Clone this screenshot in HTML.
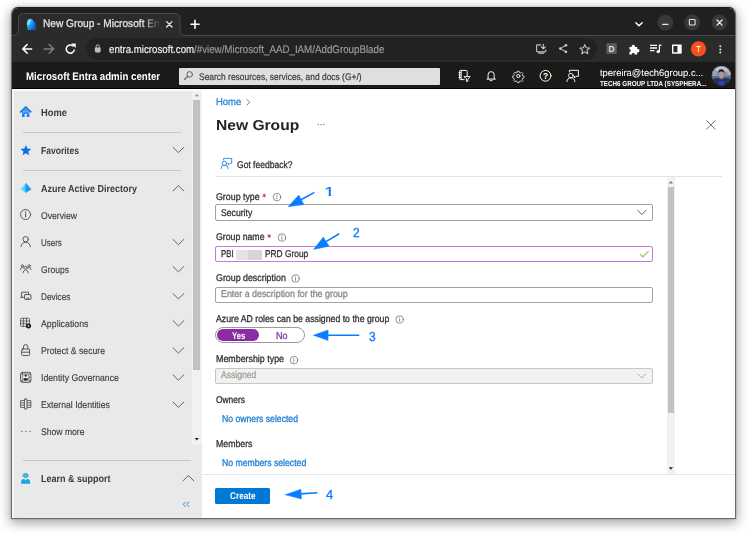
<!DOCTYPE html>
<html lang="en">
<head>
<meta charset="utf-8">
<title>New Group - Microsoft Entra admin center</title>
<style>
*{box-sizing:border-box;margin:0;padding:0}
html,body{width:750px;height:533px;overflow:hidden;background:#fff}
body{font-family:"Liberation Sans",sans-serif;position:relative;color:#323130}
.abs,.t,svg.i{position:absolute}
.t{white-space:nowrap;line-height:16px;height:16px;transform-origin:0 50%;text-rendering:geometricPrecision}
.t b{font-weight:inherit}
svg.i{overflow:visible}
#win{position:absolute;left:11px;top:7px;width:725px;height:512px;border:1px solid #6a6a6a;border-top-color:#1c1c1c;border-radius:7px 7px 0 0;overflow:hidden;background:#fff;
 box-shadow:0 3px 12px 1px rgba(0,0,0,.36),0 0 2px rgba(0,0,0,.3)}
#in{position:absolute;left:-12px;top:-8px;width:750px;height:533px}
/* ---------- browser chrome ---------- */
#titlebar{left:12px;top:8px;width:724px;height:28px;background:#202020}
#toolbar{left:12px;top:35px;width:724px;height:27px;background:#2b2b2b}
#url{left:86px;top:38px;width:511px;height:22px;border-radius:11px;background:#222}
#tabtitle{left:42.7px;top:16px;width:119px;height:16px;overflow:hidden;
 -webkit-mask-image:linear-gradient(90deg,#000 84%,transparent 99%);mask-image:linear-gradient(90deg,#000 84%,transparent 99%)}
#tabtitle .t{left:0;top:0;font-size:11px;line-height:16px;height:16px;color:#e6e6e6;-webkit-text-stroke:.25px}
#urltext b{color:#f2f2f2}
/* ---------- entra header ---------- */
#ehead{left:12px;top:62px;width:724px;height:27px;background:#1b1a19;border-bottom:1px solid #000}
#search{left:179px;top:67.5px;width:260.6px;height:17px;background:#e1dfdd;border-radius:1px}
/* ---------- sidebar ---------- */
#side{left:12px;top:89px;width:190px;height:430px;background:#e9e9e9;border-left:2px solid #f8f8f8;border-top:2px solid #fbfbfb}
#sbtrack{left:191.8px;top:91px;width:10.2px;height:354px;background:#f1f1f1}
#sbthumb{left:193.3px;top:99.6px;width:7.1px;height:270.4px;background:#c1c1c1}
.sep{height:1px;background:#c8c8c8}
/* ---------- main ---------- */
.hl{height:1px;background:#e3e3e3}
.inp{border:1px solid #a3a19f;border-radius:2px;background:#fff}
#mtrack{left:666.5px;top:177px;width:8.8px;height:297px;background:#f1f1f1}
#mthumb{left:667.9px;top:187.2px;width:6.6px;height:226px;background:#c1c1c1}
</style>
</head>
<body>
<div id="win"><div id="in">

<!-- ================= BROWSER CHROME ================= -->
<div id="titlebar" class="abs"></div>
<div id="toolbar" class="abs"></div>
<svg class="i" style="left:0;top:0" width="750" height="64" viewBox="0 0 750 64">
 <path d="M12 35.500C16 35.500 18.500 33.500 18.500 29.500V18.500Q18.500 13.500 23.500 13.500H175Q180 13.500 180 18.500V29.500C180 33.500 182.500 35.500 186.500 35.500V37H12z" fill="#2b2b2b"/>
 <path d="M12 35.500C16 35.500 18.500 33.500 18.500 29.500V18.500Q18.500 13.500 23.500 13.500H175Q180 13.500 180 18.500V29.500C180 33.500 182.500 35.500 186.500 35.500H736" fill="none" stroke="#4b4b4b" stroke-width="1"/>
</svg>
<div id="url" class="abs"></div>
<div id="tabtitle" class="abs"><div class="t" style="transform:scaleX(0.9222)">New Group - Microsoft Entra admin center</div></div>

<!-- ================= ENTRA HEADER ================= -->
<div id="ehead" class="abs"></div>
<div id="search" class="abs"></div>

<!-- ================= SIDEBAR ================= -->
<div id="side" class="abs"></div>
<div id="sbtrack" class="abs"></div>
<div id="sbthumb" class="abs"></div>
<div class="abs sep" style="left:22.7px;top:131.5px;width:158px"></div>
<div class="abs sep" style="left:22.7px;top:169.6px;width:158px"></div>
<div class="abs sep" style="left:22.7px;top:459.6px;width:168px"></div>


<!-- ================= MAIN ================= -->
<div class="abs hl" style="left:215.5px;top:175.6px;width:506px"></div>
<div id="mtrack" class="abs"></div>
<div id="mthumb" class="abs"></div>
<!-- Group type -->
<div class="abs inp" style="left:215.2px;top:204px;width:437.5px;height:16.5px"></div>
<!-- Group name -->
<div class="abs inp" style="left:215.2px;top:245.9px;width:437.5px;height:16px;border-color:#bb7fdb"></div>
<div class="abs" style="left:236px;top:249.5px;width:26px;height:10.5px;background:linear-gradient(90deg,#e4e4e4 0 45%,#d6d6d6 45% 100%);border-radius:1px;filter:blur(.6px)"></div>
<!-- Group description -->
<div class="abs inp" style="left:215.2px;top:286.7px;width:437.5px;height:16px"></div>
<!-- toggle -->
<div class="abs" style="left:215.2px;top:327.3px;width:89.6px;height:16px;border:1px solid #9d9b99;border-radius:8px;background:#fff"></div>
<div class="abs" style="left:217.3px;top:329.2px;width:42px;height:12.3px;border-radius:6.2px;background:#8a2da5"></div>
<!-- Membership type -->
<div class="abs inp" style="left:215.2px;top:368.1px;width:437.5px;height:15.8px;background:#f3f2f1;border-color:#c8c6c4"></div>
<!-- footer -->
<div class="abs hl" style="left:201px;top:474px;width:535px;background:#e6e6e6"></div>
<div class="abs" style="left:215.2px;top:488.1px;width:54.7px;height:16px;background:#0078d4;border-radius:1.5px"></div>


<!-- ================= TEXT ================= -->
<div class="t" style="left:108.80px;top:42px;line-height:16px;height:16px;font-size:11px;color:#f4f4f4;-webkit-text-stroke:0.15px;transform:scaleX(0.8810);">entra.microsoft.com</div>
<div class="t" style="left:194.10px;top:42px;line-height:16px;height:16px;font-size:11px;color:#9e9e9e;-webkit-text-stroke:0.15px;transform:scaleX(0.8872);">/#view/Microsoft_AAD_IAM/AddGroupBlade</div>
<div class="t" style="left:25.90px;top:69px;line-height:16px;height:16px;font-size:11px;font-weight:700;color:#ffffff;transform:scaleX(0.8811);">Microsoft Entra admin center</div>
<div class="t" style="left:198.70px;top:70px;line-height:15px;height:15px;font-size:9.6px;color:#3b3a39;-webkit-text-stroke:0.2px;transform:scaleX(0.8800);">Search resources, services, and docs (G+/)</div>
<div class="t" style="left:599.60px;top:66px;line-height:15px;height:15px;font-size:9.6px;color:#ffffff;-webkit-text-stroke:0.05px;transform:scaleX(0.9779);">tpereira@tech6group.c...</div>
<div class="t" style="left:599.60px;top:77px;line-height:13px;height:13px;font-size:7.2px;font-weight:700;color:#ffffff;transform:scaleX(0.8716);">TECH6 GROUP LTDA (SYSPHERA...</div>
<div class="t" style="left:41.30px;top:106px;line-height:15px;height:15px;font-size:10.1px;font-weight:700;color:#3b3a39;transform:scaleX(0.9235);">Home</div>
<div class="t" style="left:41.30px;top:144px;line-height:15px;height:15px;font-size:10.1px;font-weight:700;color:#3b3a39;transform:scaleX(0.8443);">Favorites</div>
<div class="t" style="left:41.30px;top:182px;line-height:15px;height:15px;font-size:10.1px;font-weight:700;color:#3b3a39;transform:scaleX(0.8897);">Azure Active Directory</div>
<div class="t" style="left:41.30px;top:209px;line-height:15px;height:15px;font-size:9.7px;color:#3b3a39;-webkit-text-stroke:0.12px;transform:scaleX(0.8916);">Overview</div>
<div class="t" style="left:41.30px;top:236px;line-height:15px;height:15px;font-size:9.7px;color:#3b3a39;-webkit-text-stroke:0.12px;transform:scaleX(0.8217);">Users</div>
<div class="t" style="left:41.30px;top:263px;line-height:15px;height:15px;font-size:9.7px;color:#3b3a39;-webkit-text-stroke:0.12px;transform:scaleX(0.8810);">Groups</div>
<div class="t" style="left:41.30px;top:290px;line-height:15px;height:15px;font-size:9.7px;color:#3b3a39;-webkit-text-stroke:0.12px;transform:scaleX(0.8529);">Devices</div>
<div class="t" style="left:41.30px;top:317px;line-height:15px;height:15px;font-size:9.7px;color:#3b3a39;-webkit-text-stroke:0.12px;transform:scaleX(0.9091);">Applications</div>
<div class="t" style="left:41.30px;top:344px;line-height:15px;height:15px;font-size:9.7px;color:#3b3a39;-webkit-text-stroke:0.12px;transform:scaleX(0.8935);">Protect &amp; secure</div>
<div class="t" style="left:41.30px;top:371px;line-height:15px;height:15px;font-size:9.7px;color:#3b3a39;-webkit-text-stroke:0.12px;transform:scaleX(0.8985);">Identity Governance</div>
<div class="t" style="left:41.30px;top:398px;line-height:15px;height:15px;font-size:9.7px;color:#3b3a39;-webkit-text-stroke:0.12px;transform:scaleX(0.8933);">External Identities</div>
<div class="t" style="left:41.30px;top:425px;line-height:15px;height:15px;font-size:9.7px;color:#3b3a39;-webkit-text-stroke:0.12px;transform:scaleX(0.8878);">Show more</div>
<div class="t" style="left:41.30px;top:472px;line-height:15px;height:15px;font-size:10.1px;font-weight:700;color:#3b3a39;transform:scaleX(0.8903);">Learn &amp; support</div>
<div class="t" style="left:215.50px;top:95px;line-height:15px;height:15px;font-size:9.8px;color:#2b88d8;-webkit-text-stroke:0.3px;transform:scaleX(0.9678);">Home</div>
<div class="t" style="left:216.00px;top:116px;line-height:20px;height:20px;font-size:14.5px;font-weight:700;color:#252423;transform:scaleX(1.0757);">New Group</div>
<div class="t" style="left:237.30px;top:158px;line-height:15px;height:15px;font-size:9.8px;color:#323130;-webkit-text-stroke:0.3px;transform:scaleX(0.8708);">Got feedback?</div>
<div class="t" style="left:215.50px;top:190px;line-height:15px;height:15px;font-size:9.8px;color:#323130;-webkit-text-stroke:0.3px;transform:scaleX(0.9016);">Group type</div>
<div class="t" style="left:221.30px;top:206px;line-height:15px;height:15px;font-size:9.8px;color:#323130;-webkit-text-stroke:0.3px;transform:scaleX(0.8816);">Security</div>
<div class="t" style="left:215.50px;top:230px;line-height:15px;height:15px;font-size:9.8px;color:#323130;-webkit-text-stroke:0.3px;transform:scaleX(0.8904);">Group name</div>
<div class="t" style="left:221.30px;top:247px;line-height:15px;height:15px;font-size:9.8px;color:#323130;-webkit-text-stroke:0.3px;transform:scaleX(0.7976);">PBI</div>
<div class="t" style="left:265.30px;top:247px;line-height:15px;height:15px;font-size:9.8px;color:#323130;-webkit-text-stroke:0.3px;transform:scaleX(0.8531);">PRD Group</div>
<div class="t" style="left:215.50px;top:271px;line-height:15px;height:15px;font-size:9.8px;color:#323130;-webkit-text-stroke:0.3px;transform:scaleX(0.9026);">Group description</div>
<div class="t" style="left:221.30px;top:287px;line-height:15px;height:15px;font-size:9.8px;color:#8a8886;-webkit-text-stroke:0.3px;transform:scaleX(0.9052);">Enter a description for the group</div>
<div class="t" style="left:215.50px;top:312px;line-height:15px;height:15px;font-size:9.8px;color:#323130;-webkit-text-stroke:0.3px;transform:scaleX(0.8913);">Azure AD roles can be assigned to the group</div>
<div class="t" style="left:232.00px;top:329px;line-height:15px;height:15px;font-size:9.8px;font-weight:700;color:#ffffff;transform:scaleX(0.7867);">Yes</div>
<div class="t" style="left:276.00px;top:329px;line-height:15px;height:15px;font-size:9.8px;color:#8a2da5;-webkit-text-stroke:0.3px;transform:scaleX(0.9177);">No</div>
<div class="t" style="left:215.50px;top:352px;line-height:15px;height:15px;font-size:9.8px;color:#323130;-webkit-text-stroke:0.3px;transform:scaleX(0.9048);">Membership type</div>
<div class="t" style="left:221.30px;top:368px;line-height:15px;height:15px;font-size:9.8px;color:#a19f9d;-webkit-text-stroke:0.3px;transform:scaleX(0.8732);">Assigned</div>
<div class="t" style="left:215.50px;top:393px;line-height:15px;height:15px;font-size:9.8px;color:#323130;-webkit-text-stroke:0.3px;transform:scaleX(0.8589);">Owners</div>
<div class="t" style="left:221.90px;top:412px;line-height:15px;height:15px;font-size:9.8px;color:#1a7fd6;-webkit-text-stroke:0.3px;transform:scaleX(0.8832);">No owners selected</div>
<div class="t" style="left:215.50px;top:437px;line-height:15px;height:15px;font-size:9.8px;color:#323130;-webkit-text-stroke:0.3px;transform:scaleX(0.8936);">Members</div>
<div class="t" style="left:221.90px;top:456px;line-height:15px;height:15px;font-size:9.8px;color:#1a7fd6;-webkit-text-stroke:0.3px;transform:scaleX(0.8836);">No members selected</div>
<div class="t" style="left:229.90px;top:489px;line-height:15px;height:15px;font-size:9.8px;font-weight:700;color:#ffffff;transform:scaleX(0.8393);">Create</div>
<div class="t" style="left:324.01px;top:182px;line-height:19px;height:19px;font-size:13px;color:#0a7cff;-webkit-text-stroke:.2px;transform:scaleX(1.5151);clip-path:polygon(0 0,100% 0,100% 12.64px,4.65px 12.64px,4.65px 100%,3.05px 100%,3.05px 12.64px,0 12.64px)">1</div>
<div class="t" style="left:352.80px;top:223px;line-height:19px;height:19px;font-size:13px;color:#0a7cff;-webkit-text-stroke:0.3px;transform:scaleX(0.9261);">2</div>
<div class="t" style="left:368.50px;top:327px;line-height:19px;height:19px;font-size:13px;color:#0a7cff;-webkit-text-stroke:0.3px;transform:scaleX(0.9261);">3</div>
<div class="t" style="left:326.10px;top:485px;line-height:19px;height:19px;font-size:13px;color:#0a7cff;-webkit-text-stroke:0.3px;transform:scaleX(0.9952);">4</div>

<!-- ================= ICONS ================= -->
<svg class="i" style="left:0;top:0" width="750" height="533" viewBox="0 0 750 533" fill="none" stroke-linecap="round" stroke-linejoin="round" font-family="Liberation Sans, sans-serif">
<defs>
 <linearGradient id="gfav" x1="0" y1="0" x2=".7" y2="1"><stop offset="0" stop-color="#58e4ff"/><stop offset=".5" stop-color="#1ea7f2"/><stop offset="1" stop-color="#0a78e6"/></linearGradient>
 <linearGradient id="ghome" x1="0" y1="0" x2="0" y2="1"><stop offset="0" stop-color="#4aa3f7"/><stop offset="1" stop-color="#0f78e6"/></linearGradient>
 <clipPath id="cav"><circle cx="721.4" cy="75.7" r="9.7"/></clipPath>
 <filter id="b1"><feGaussianBlur stdDeviation=".7"/></filter>
 <filter id="b2" x="-20%" y="-20%" width="140%" height="140%"><feGaussianBlur stdDeviation=".55"/></filter>
</defs>

<!-- ===== chrome: tab strip ===== -->
<g id="ic-chrome">
 <!-- favicon -->
 <path d="M30.500 21.200h3q2.100 0 2.100 2.300v6.300h-6.500z" fill="#1762d8"/>
 <path d="M27 27.200v-3.600q0-4.800 3.400-4.800 3.100 0 3.100 4.400v2.600q0 3.700-3.600 4.100h-2q-.9-.9-.3-2.100z" fill="url(#gfav)"/>
 <ellipse cx="28.900" cy="22.400" rx="1.500" ry="2.700" fill="#c9fbff" opacity=".6" filter="url(#b2)" transform="rotate(18 28.9 22.4)"/>
 <!-- tab close, new tab -->
 <path d="M166.6 21.600l5.400 5.400M172 21.600l-5.400 5.400" stroke="#ececec" stroke-width="1.3"/>
 <path d="M191 24.200h8M195 20.200v8" stroke="#fff" stroke-width="1.6"/>
 <!-- tab search chevron -->
 <path d="M635.9 22.700l3.100 3.100 3.100-3.100" stroke="#fff" stroke-width="1.5"/>
 <!-- window buttons -->
 <circle cx="665.300" cy="22.600" r="7.900" fill="#383838"/>
 <circle cx="692.200" cy="22.500" r="7.900" fill="#383838"/>
 <circle cx="719.500" cy="22.500" r="7.900" fill="#383838"/>
 <path d="M662.600 24.300h5.400" stroke="#e4e4e4" stroke-width="1.300"/>
 <rect x="689.400" y="19.500" width="5.700" height="5.500" rx=".6" stroke="#e4e4e4" stroke-width="1.100"/>
 <path d="M717 20l5.100 5.100M722.100 20l-5.100 5.100" stroke="#f0f0f0" stroke-width="1.300"/>
</g>

<!-- ===== chrome: toolbar ===== -->
<g id="ic-toolbar">
 <path d="M31.700 48.900H23M27.200 44.500l-4.400 4.400 4.400 4.400" stroke="#fff" stroke-width="1.500"/>
 <path d="M44.200 48.900h8.700M49.200 44.500l4.400 4.400-4.400 4.400" stroke="#7c7c7c" stroke-width="1.500"/>
 <path d="M74.300 50.100a4.100 4.100 0 1 1-1.300-4.200" stroke="#fff" stroke-width="1.500"/>
 <path d="M71.300 43.600h4.400v4.400z" fill="#fff"/>
 <!-- lock -->
 <rect x="94.900" y="47.500" width="5.700" height="4.900" rx=".8" fill="#bdbdbd"/>
 <path d="M96.200 47.600v-1.300a1.550 1.550 0 0 1 3.100 0v1.300" stroke="#bdbdbd" stroke-width="1"/>
 <!-- install -->
 <path d="M540.600 44.900h-3.100q-.9 0-.9.900v5.200q0 .9.900.9h7.400q.9 0 .9-.9v-1.300M538.800 53.300h5" stroke="#c6c6c6" stroke-width="1.100"/>
 <path d="M543.300 44.200v4.300M541.300 46.800l2 2 2-2" stroke="#c6c6c6" stroke-width="1.100"/>
 <!-- share -->
 <path d="M565.800 45.300l-5.400 3.300 5.400 3.200" stroke="#c6c6c6" stroke-width="1"/>
 <circle cx="565.900" cy="45.300" r="1.400" fill="#c6c6c6"/><circle cx="560.400" cy="48.600" r="1.400" fill="#c6c6c6"/><circle cx="565.900" cy="51.800" r="1.400" fill="#c6c6c6"/>
 <!-- star -->
 <path d="M584.800 44.600l1.400 3.200 3.400.3-2.600 2.300.8 3.300-3-1.800-3 1.800.8-3.300-2.600-2.300 3.400-.3z" stroke="#c6c6c6" stroke-width="1.050"/>
 <!-- D extension -->
 <rect x="606.400" y="43.300" width="10.400" height="10.700" rx="1" fill="#5b5b5b"/>
 <text x="611.600" y="51.700" font-size="8.400" font-weight="700" text-anchor="middle" fill="#dedede" stroke="none">D</text>
 <!-- puzzle -->
 <path d="M629.400 47h2.300a1.700 1.700 0 1 1 3.200 0h2.300v2.100a1.700 1.700 0 1 1 0 3.200v2.100h-2.500a1.400 1.400 0 1 0-2.800 0h-2.500v-2.400a1.400 1.400 0 1 0 0-2.800z" fill="#fff"/>
 <!-- media -->
 <path d="M650 45.300h7M650 48h7M650 50.700h4.400" stroke="#fff" stroke-width="1.300" stroke-linecap="butt"/>
 <path d="M659.400 51.500v-6.300h1.600" stroke="#fff" stroke-width="1.200"/><circle cx="658.100" cy="51.600" r="1.600" fill="#fff"/>
 <!-- side panel -->
 <rect x="672.700" y="45.200" width="8.300" height="7.800" stroke="#fff" stroke-width="1.400"/>
 <rect x="677.400" y="45.200" width="3.600" height="7.800" fill="#fff"/>
 <!-- profile -->
 <circle cx="698.500" cy="48.900" r="7.600" fill="#f4511e"/>
 <text x="698.500" y="51.900" font-size="8.300" text-anchor="middle" fill="#fff" stroke="none">T</text>
 <!-- menu -->
 <circle cx="720.300" cy="46.300" r="1" fill="#e2e2e2"/><circle cx="720.300" cy="49.400" r="1" fill="#e2e2e2"/><circle cx="720.300" cy="52.500" r="1" fill="#e2e2e2"/>
</g>

<!-- ===== entra header ===== -->
<g id="ic-entra" stroke="#fff" stroke-width=".95">
 <!-- search -->
 <circle cx="189.700" cy="74.400" r="2.800" stroke="#605e5c" stroke-width="1"/>
 <path d="M187.600 76.500l-3.200 3.200" stroke="#605e5c" stroke-width="1.100"/>
 <!-- directory + filter -->
 <path d="M464.200 79.600h-3.600q-1 0-1-1v-7.200q0-1 1-1h5.600q1 0 1 1v4.300M461.200 70.600v8.800M459 72.600h1.600M459 75h1.600M459 77.400h1.600"/>
 <path d="M464.300 76.600h5.800l-2.200 2.600v2.200h-1.400v-2.200z" stroke-width=".9"/>
 <!-- bell -->
 <path d="M487 79.100h8.300M488.100 79v-4.300a3.050 3.050 0 0 1 6.100 0V79M489.900 80.400q1.250 1.300 2.500 0"/>
 <!-- gear -->
 <circle cx="518.300" cy="76" r="1.600"/>
 <path transform="translate(518.3 76) scale(.86) translate(-518.3 -76)" d="M517.300 70.500h2l.4 1.500 1.200.5 1.400-.8 1.400 1.400-.8 1.400.5 1.200 1.500.4v2l-1.500.4-.5 1.200.8 1.400-1.400 1.400-1.400-.8-1.200.5-.4 1.500h-2l-.4-1.500-1.200-.5-1.400.8-1.400-1.400.8-1.400-.5-1.200-1.500-.4v-2l1.500-.4.5-1.200-.8-1.400 1.400-1.400 1.400.8 1.200-.5z" stroke-width=".85"/>
 <!-- help -->
 <circle cx="545.500" cy="75.800" r="5.400" stroke-width="1"/>
 <text x="545.500" y="78.900" font-size="8.400" font-weight="700" text-anchor="middle" fill="#fff" stroke="none">?</text>
 <!-- feedback -->
 <circle cx="570.900" cy="75.700" r="2.350"/>
 <path d="M566.900 81.600a4 4 0 0 1 8 0M569.400 72v-1.700h9v6h-2.200l-1.700 1.700v-1.700"/>
</g>
<!-- account photo -->
<g clip-path="url(#cav)">
 <rect x="711" y="65" width="21" height="21" fill="#7f8da8"/>
 <g filter="url(#b2)">
  <rect x="709" y="63" width="25" height="8.500" fill="#b9c6d2"/>
  <ellipse cx="714" cy="73" rx="3" ry="3.500" fill="#93a3bb"/>
  <ellipse cx="729.500" cy="72" rx="2.500" ry="3" fill="#c2b59f"/>
  <rect x="709" y="76" width="25" height="3" fill="#5f6d8f"/>
  <path d="M710 80q6-2.500 8.500-2l3 1.500 3-1.500q3-.5 8.500 2v8h-23z" fill="#27315c"/>
  <path d="M719.300 80.500l2.200 1 2.200-1 1 6h-6.400z" fill="#2746c0"/>
  <ellipse cx="721.300" cy="74.700" rx="2.500" ry="3.400" fill="#b8948a"/>
  <path d="M718.400 73q-.3-3.600 2.900-3.700 3.300 0 3 3.700-1.400-1.500-3-1.400-1.600 0-2.900 1.400z" fill="#1d1a20"/>
 </g>
 <circle cx="721.400" cy="75.700" r="9.500" stroke="#1b1a19" stroke-width=".5" opacity=".6"/>
</g>

<!-- ===== sidebar ===== -->
<g id="ic-side">
 <!-- home -->
 <path d="M22 111.300h7.400v5.600H22z" fill="url(#ghome)"/>
 <path d="M19.900 111.700l5.800-5.500 5.800 5.500-.9.900-4.900-4.600-4.900 4.600z" fill="#0f6cbd" stroke="#0f6cbd" stroke-width=".5"/>
 <path d="M21.800 111.200l3.900-3.600 3.900 3.600z" fill="#3f9af5"/>
 <rect x="24.700" y="114" width="2" height="2.900" fill="#f3f2f1"/>
 <!-- star -->
 <path d="M25.900 145l1.500 3.600 3.900.3-3 2.500.95 3.800-3.350-2.050-3.350 2.050.95-3.800-3-2.500 3.900-.3z" fill="#0f6fe6"/>
 <!-- AAD -->
 <path d="M25.900 182.900l5.500 6.300-5.500 3.500-5.500-3.500z" fill="#50e6ff"/>
 <path d="M25.900 182.900l5.500 6.300-5.500 3.500z" fill="#2b9ae9"/>
 <path d="M25.900 182.900l2.700 6.800-2.700 3-2.700-3z" fill="#37c2f5" opacity=".75"/>
 <path d="M25.900 182.900l2.700 6.800-2.700 3z" fill="#1d6fd0" opacity=".55"/>
 <g stroke="#4c4b4a" stroke-width=".9">
  <!-- overview -->
  <circle cx="25.600" cy="214.500" r="5"/>
  <path d="M25.600 213.700v3.200" stroke-width="1"/><circle cx="25.600" cy="212" r=".35" fill="#4c4b4a" stroke-width=".5"/>
  <!-- users -->
  <circle cx="25.700" cy="239.200" r="2.700"/>
  <path d="M21.100 246.700a4.600 4.600 0 0 1 9.200 0"/>
  <!-- groups -->
  <g stroke-width=".8">
  <circle cx="25.700" cy="267.700" r="1.500"/><path d="M23 272.900q.3-3 2.700-3 2.400 0 2.700 3"/>
  <circle cx="22.300" cy="265.900" r="1.150"/><path d="M20.300 269.700q.2-2.200 2-2.200 1 0 1.500.6"/>
  <circle cx="29.100" cy="265.900" r="1.150"/><path d="M31.100 269.700q-.2-2.200-2-2.200-1 0-1.500.6"/>
  </g>
  <!-- devices -->
  <path d="M24 297.300h-3.300M21.600 297.300v-5.100h6.900v2.100" />
  <rect x="24.500" y="294.600" width="6.500" height="4.800" rx=".7"/>
  <path d="M26.600 299.200v-1.300h2.200v1.300" stroke-width=".7"/>
  <!-- applications -->
  <path d="M26.500 326.400h-5q-1 0-1-1v-6.100q0-1 1-1h7q1 0 1 1v3.700M20.500 321h9M20.500 323.700h6M23.400 318.300v8.100M26.500 318.300v5" stroke-width=".8"/>
  <circle cx="28.500" cy="325.800" r="2.600" fill="#201f1e" stroke="none"/>
  <path d="M28.500 324.500l.9 1.900h-1.800z" fill="#fff" stroke="none"/>
  <!-- lock -->
  <rect x="21.700" y="349" width="7.900" height="6.500" rx=".8"/>
  <path d="M23.500 349v-2.200a2.200 2.200 0 0 1 4.400 0V349M21.900 352.200h7.500" />
  <!-- identity governance -->
  <rect x="20.500" y="372.400" width="10.400" height="10" rx="2"/>
  <circle cx="25.700" cy="377.300" r="3.600" stroke-width=".7"/>
  <circle cx="25.700" cy="375.600" r="1.150" fill="#201f1e" stroke="none"/>
  <path d="M23.500 378.200h4.400a2.200 2.200 0 0 1-4.400 0z" fill="#201f1e" stroke="none"/>
  <circle cx="21.900" cy="373.800" r=".7" stroke-width=".6"/><circle cx="29.500" cy="373.800" r=".7" stroke-width=".6"/><circle cx="21.900" cy="381" r=".7" stroke-width=".6"/><circle cx="29.500" cy="381" r=".7" stroke-width=".6"/>
  <!-- external identities -->
  <path d="M24.500 400.600h-3.900v6.900h3.900M26.900 400.600h3.900v6.900h-3.900M20.600 402.900h3.900M20.600 405.200h3.900M26.900 402.900h3.900M26.900 405.200h3.900" stroke-width=".8"/>
  <rect x="24.400" y="398.700" width="2.600" height="10.600" rx="1.300" fill="#e9e9e9"/>
 </g>
 <!-- show more dots -->
 <circle cx="21.800" cy="431.300" r=".65" fill="#4c4b4a"/><circle cx="26" cy="431.300" r=".65" fill="#4c4b4a"/><circle cx="30.200" cy="431.300" r=".65" fill="#4c4b4a"/>
 <!-- learn & support -->
 <path d="M22.600 476.300a3 3 0 0 1 6 0" stroke="#8a8886" stroke-width=".8"/>
 <circle cx="25.600" cy="475.700" r="2.500" fill="#32bedd"/>
 <path d="M21.100 483.700v-1.600q0-2.800 2.800-3.100h3.400q2.800.3 2.800 3.100v1.600z" fill="#19a6d8"/>
 <path d="M24.600 479l1 1.600 1-1.600z" fill="#fff"/>
 <!-- chevrons -->
 <g stroke="#4c4b4a" stroke-width=".85">
  <path d="M173 147.300l5.400 5.300 5.400-5.300"/>
  <path d="M173 190.900l5.400-5.300 5.400 5.300"/>
  <path d="M173 239.400l5.400 5.300 5.400-5.300"/>
  <path d="M173 266.500l5.400 5.300 5.400-5.300"/>
  <path d="M173 293.600l5.400 5.300 5.400-5.300"/>
  <path d="M173 320.700l5.400 5.300 5.400-5.300"/>
  <path d="M173 347.800l5.400 5.300 5.400-5.300"/>
  <path d="M173 374.900l5.400 5.300 5.400-5.300"/>
  <path d="M173 402l5.400 5.300 5.400-5.300"/>
  <path d="M183 480.800l5.400-5.300 5.400 5.300"/>
 </g>
 <!-- collapse -->
 <path d="M185.400 502.100l-2.200 2.200 2.200 2.200M188.900 502.100l-2.200 2.200 2.200 2.200" stroke="#2b7cd3" stroke-width=".9"/>
 <!-- scrollbar arrows -->
 <path d="M194.800 96.200l2-2.300 2 2.300z" fill="#8c8c8c"/>
 <path d="M194.700 438.100l2.100 2.500 2.100-2.500z" fill="#202020"/>
</g>

<!-- ===== main ===== -->
<g id="ic-main">
 <!-- breadcrumb chevron -->
 <path d="M247 99.400l2.700 2.800-2.700 2.800" stroke="#605e5c" stroke-width=".8"/>
 <!-- ellipsis -->
 <circle cx="318.200" cy="124.600" r=".7" fill="#605e5c"/><circle cx="321.100" cy="124.600" r=".7" fill="#605e5c"/><circle cx="324" cy="124.600" r=".7" fill="#605e5c"/>
 <!-- blade close -->
 <path d="M706.700 120.700l8.400 8.400M715.100 120.700l-8.400 8.400" stroke="#4c4b4a" stroke-width=".8"/>
 <!-- got feedback -->
 <g stroke="#2b88d8" stroke-width=".9">
  <circle cx="224.400" cy="163.500" r="2.250"/>
  <path d="M220.900 168.700a3.600 3.600 0 0 1 7.200 0M223.600 160v-1.600h8.100v4.900h-1.800l-1.500 1.500v-1.500"/>
 </g>
 <!-- required stars -->
 <path d="M264.200 194v3M262.900 194.800l2.600 1.500M265.500 194.800l-2.600 1.500" stroke="#a4262c" stroke-width=".75"/>
 <path d="M269.200 234.500v3M267.900 235.300l2.600 1.500M270.500 235.300l-2.600 1.500" stroke="#a4262c" stroke-width=".75"/>
 <!-- info icons -->
 <g stroke="#605e5c" stroke-width=".7">
  <circle cx="276.900" cy="197.100" r="3.700"/><path d="M276.900 196.700v2.200M276.900 195.200v.2"/>
  <circle cx="281.900" cy="237.500" r="3.700"/><path d="M281.900 237.100v2.200M281.900 235.600v.2"/>
  <circle cx="295.500" cy="278.500" r="3.700"/><path d="M295.500 278.100v2.200M295.500 276.600v.2"/>
  <circle cx="399.600" cy="319.500" r="3.700"/><path d="M399.600 319.100v2.200M399.600 317.600v.2"/>
  <circle cx="293.900" cy="360.200" r="3.700"/><path d="M293.900 359.800v2.200M293.900 358.300v.2"/>
 </g>
 <!-- select chevrons -->
 <path d="M637.700 210.400l4.100 4.100 4.100-4.100" stroke="#484644" stroke-width=".85"/>
 <path d="M637.700 373.900l4.100 4.100 4.100-4.100" stroke="#a19f9d" stroke-width=".85"/>
 <!-- valid check -->
 <path d="M640.300 254.300l2.600 2.600 5.400-5.600" stroke="#8cc14c" stroke-width="1.050"/>
 <!-- main scrollbar arrows -->
 <path d="M668.700 183.400l2.200-2.500 2.200 2.500z" fill="#7d7d7d"/>
 <path d="M668.800 467.200l2.100 2.500 2.100-2.500z" fill="#202020"/>
</g>

<!-- ===== annotation arrows ===== -->
<g id="ic-arrows" fill="#0a7cff" stroke="#0a7cff" stroke-linejoin="miter" stroke-linecap="butt">
 <path d="M314.400 192.400L301 199.700" stroke-width="1.600"/>
 <path d="M288 206.800L298.800 195 304 204.600z" stroke-width=".4"/>
 <path d="M339.200 233.700L326 241.600" stroke-width="1.600"/>
 <path d="M313.500 249.400L323.300 237.100 329.200 246.200z" stroke-width=".4"/>
 <path d="M359.300 335.200H327" stroke-width="1.600"/>
 <path d="M313.200 335.200L328.100 329.900V340.500z" stroke-width=".4"/>
 <path d="M317.300 492.700L300 493.900" stroke-width="1.600"/>
 <path d="M285 494.800L300.900 489.200 301.500 498.900z" stroke-width=".4"/>
</g>


</svg>


</div></div>
</body>
</html>
